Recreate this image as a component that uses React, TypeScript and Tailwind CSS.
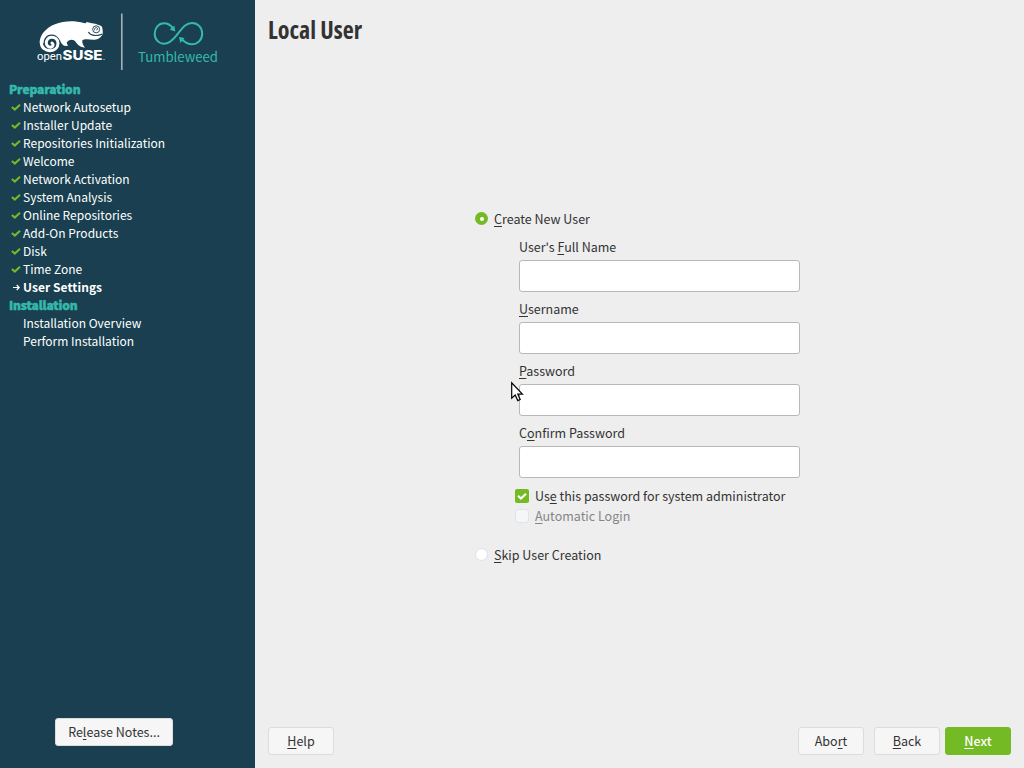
import React from "react";

type StepState = "done" | "current" | "todo";

const preparation: { label: string; state: StepState }[] = [
  { label: "Network Autosetup", state: "done" },
  { label: "Installer Update", state: "done" },
  { label: "Repositories Initialization", state: "done" },
  { label: "Welcome", state: "done" },
  { label: "Network Activation", state: "done" },
  { label: "System Analysis", state: "done" },
  { label: "Online Repositories", state: "done" },
  { label: "Add-On Products", state: "done" },
  { label: "Disk", state: "done" },
  { label: "Time Zone", state: "done" },
  { label: "User Settings", state: "current" },
];

const installation: { label: string; state: StepState }[] = [
  { label: "Installation Overview", state: "todo" },
  { label: "Perform Installation", state: "todo" },
];

function Logo() {
  return (
    <svg width="255" height="80" viewBox="0 0 255 80" className="block">
      <g transform="scale(0.33333)">
        <path
          fill="#fff"
          d="M119 130C118 105 140 82 165 73C185 64 212 62 232 65C242 66 250 68 257 70L260 66L276 70C290 72 300 76 306 80C308 88 309 96 308 102C304 112 294 119 284 119C270 120 256 115 247 121C246 130 250 137 255 143L243 140C232 136 229 126 222 121C214 117 204 121 200 128L204 138L192 137C184 132 182 124 177 116C168 102 145 98 135 114C131 120 131 125 131 130Z"
        />
        <path
          fill="none"
          stroke="#fff"
          strokeWidth="9"
          strokeLinecap="round"
          d="M124 128C124 144 137 152 150 152C165 152 174 142 174 130C174 118 165 111 153 112C144 113 138 121 139 130C140 139 148 143 154 141C160 139 161 132 156 129"
        />
        <circle cx="288.5" cy="88" r="10.5" fill="none" stroke="#193f50" strokeWidth="2.8" />
        <path d="M284 91C282 86 286 82 290 83C294 84 294 90 289 90" fill="none" stroke="#193f50" strokeWidth="2.6" />
        <path d="M265 96C271 107 290 110 307 102" fill="none" stroke="#193f50" strokeWidth="3.2" />
      </g>
      <text x="37" y="60.3" fill="#fff" fontSize="11.5" textLength="25" lengthAdjust="spacingAndGlyphs" className="font-['Roboto',sans-serif]">
        open
      </text>
      <text x="62.5" y="60.3" fill="#fff" fontSize="13" fontWeight="800" textLength="40" lengthAdjust="spacingAndGlyphs" className="font-['Inter',sans-serif]">
        SUSE
      </text>
      <circle cx="104" cy="59.5" r="0.6" fill="#fff" />
      <rect x="121" y="13.5" width="1.6" height="56.5" fill="#a3b2b9" />
      <g fill="none" stroke="#35b9ab" strokeWidth="2">
        <path d="M173 28.3C170.8 25.3 167.5 23.3 164 23.3C158.5 23.3 154.7 28 154.7 33.7C154.7 39.5 158.8 43.7 164 43.7C171 43.7 175 37 178 33.5C182 28.5 185.5 23 192 23C198 23 202.2 27.8 202.2 33.7C202.2 39.6 198 44.2 192 44.2C188 44.2 184.8 42.3 182 39.5" />
      </g>
      <path d="M175.3 31.4L169.8 29.8L174.3 25.6Z M178.9 37.1L184.6 38.1L180.4 43Z" fill="#35b9ab" />
      <text x="138" y="61.5" fill="#35b9ab" fontSize="13.2" textLength="80" className="font-['Noto_Sans_CJK_SC',sans-serif]">
        Tumbleweed
      </text>
    </svg>
  );
}

function StepIcon({ state }: { state: StepState }) {
  return (
    <svg width="14" height="18" viewBox="0 0 14 18" className="block shrink-0">
      {state === "done" && (
        <path d="M2.9 9L5.8 11.6L11 6.8" fill="none" stroke="#73ba25" strokeWidth="2.1" />
      )}
      {state === "current" && (
        <path d="M4 9.5H10M7.7 7L10.2 9.5L7.7 12" fill="none" stroke="#fff" strokeWidth="1.2" />
      )}
    </svg>
  );
}

function Steps({ title, items }: { title: string; items: { label: string; state: StepState }[] }) {
  return (
    <section>
      <h2 className="font-black tracking-[-0.12px] text-[#35b9ab] [-webkit-text-stroke:0.5px_#35b9ab]">{title}</h2>
      <ul>
        {items.map((s) => (
          <li key={s.label} className="flex h-[18px]">
            <StepIcon state={s.state} />
            <span className={s.state === "current" ? "font-bold tracking-[0.06px]" : "font-normal"}>{s.label}</span>
          </li>
        ))}
      </ul>
    </section>
  );
}

/** Text whose mnemonic letter, the one after "&", is underlined. */
function Mnemonic({ text }: { text: string }) {
  const i = text.indexOf("&");
  return (
    <span className="whitespace-pre">
      {text.slice(0, i)}
      <span className="underline decoration-1 underline-offset-2 [text-decoration-skip-ink:none]">{text[i + 1]}</span>
      {text.slice(i + 2)}
    </span>
  );
}

function Radio({ text, checked }: { text: string; checked?: boolean }) {
  return (
    <div className="flex h-[18px]">
      <span
        className={
          checked
            ? "mt-[2px] mr-1.5 flex size-[13px] items-center justify-center rounded-full bg-[#73ba25]"
            : "mt-[2px] mr-1.5 size-[13px] rounded-full border border-[#dce0ec] bg-white"
        }
      >
        {checked && <span className="size-[4px] rounded-full bg-white" />}
      </span>
      <Mnemonic text={text} />
    </div>
  );
}

function Field({ text }: { text: string }) {
  return (
    <label className="flex flex-col gap-1">
      <Mnemonic text={text} />
      <span className="h-8 rounded-[3px] border border-[#b8b8b8] bg-white" />
    </label>
  );
}

function Button({ text, className }: { text: string; className: string }) {
  return (
    <button className={"flex h-7 items-center justify-center rounded-[3px] border " + className}>
      <Mnemonic text={text} />
    </button>
  );
}

const plain = "border-[#dcdcdc] bg-[#f6f6f6]";

export default function App() {
  return (
    <div className="flex h-[768px] w-[1024px] overflow-hidden bg-[#eeeeee] font-['Noto_Sans_CJK_SC',sans-serif] text-[12.5px] leading-[18px] text-[#333333]">
      <aside className="flex w-[255px] shrink-0 flex-col bg-[#193f50]">
        <Logo />
        <nav className="flex-1 pl-[9px] text-[12px] text-white">
          <Steps title="Preparation" items={preparation} />
          <Steps title="Installation" items={installation} />
        </nav>
        <div className="pb-[22px] pl-[55px]">
          <Button text="Re&lease Notes..." className={"w-[118px] " + plain} />
        </div>
      </aside>

      <main className="flex flex-1 flex-col">
        <h1 className="pt-[13px] pl-[13px] font-['Open_Sans',sans-serif] text-[24px] leading-[33px] font-bold [font-stretch:75%]">
          Local User
        </h1>
        <form className="mt-[164px] ml-[220px] w-[325px]">
          <Radio text="&Create New User" checked />
          <div className="mt-2.5 ml-[44px] flex flex-col gap-2">
            <Field text="User's &Full Name" />
            <Field text="&Username" />
            <Field text="&Password" />
            <Field text="C&onfirm Password" />
          </div>
          <div className="mt-[9px] ml-[40px] flex flex-col gap-[2px]">
            <div className="flex gap-1.5">
              <span className="mt-[2px] size-[14px] rounded-[2px] bg-[#73ba25]">
                <svg viewBox="0 0 14 14" className="size-[14px]">
                  <path d="M3 6.8L5.9 9.5L11 4.7" fill="none" stroke="#fff" strokeWidth="2.1" />
                </svg>
              </span>
              <Mnemonic text="Us&e this password for system administrator" />
            </div>
            <div className="flex gap-1.5 text-[#858585]">
              <span className="mt-[2px] size-[14px] rounded-[3px] border border-[#dfe3ec] bg-[#f5f6f8]" />
              <Mnemonic text="&Automatic Login" />
            </div>
          </div>
          <div className="mt-[21px]">
            <Radio text="&Skip User Creation" />
          </div>
        </form>
        <footer className="mt-auto flex pr-[13px] pb-[13px] pl-[13px]">
          <Button text="&Help" className={"w-[66px] " + plain} />
          <Button text="Abo&rt" className={"ml-auto w-[66px] " + plain} />
          <Button text="&Back" className={"ml-2.5 w-[66px] " + plain} />
          <Button text="&Next" className="ml-[5px] w-[66px] border-[#73ba25] bg-[#73ba25] font-medium text-white" />
        </footer>
      </main>

      <svg width="14" height="22" viewBox="0 0 14 22" className="absolute top-[381px] left-[510px]">
        <path
          d="M1.7 1.8V17.2L5.2 14L7.8 19.6L10.2 18.5L7.8 13.2H12.4Z"
          fill="#fff"
          stroke="#000"
          strokeWidth="1.2"
        />
      </svg>
    </div>
  );
}
